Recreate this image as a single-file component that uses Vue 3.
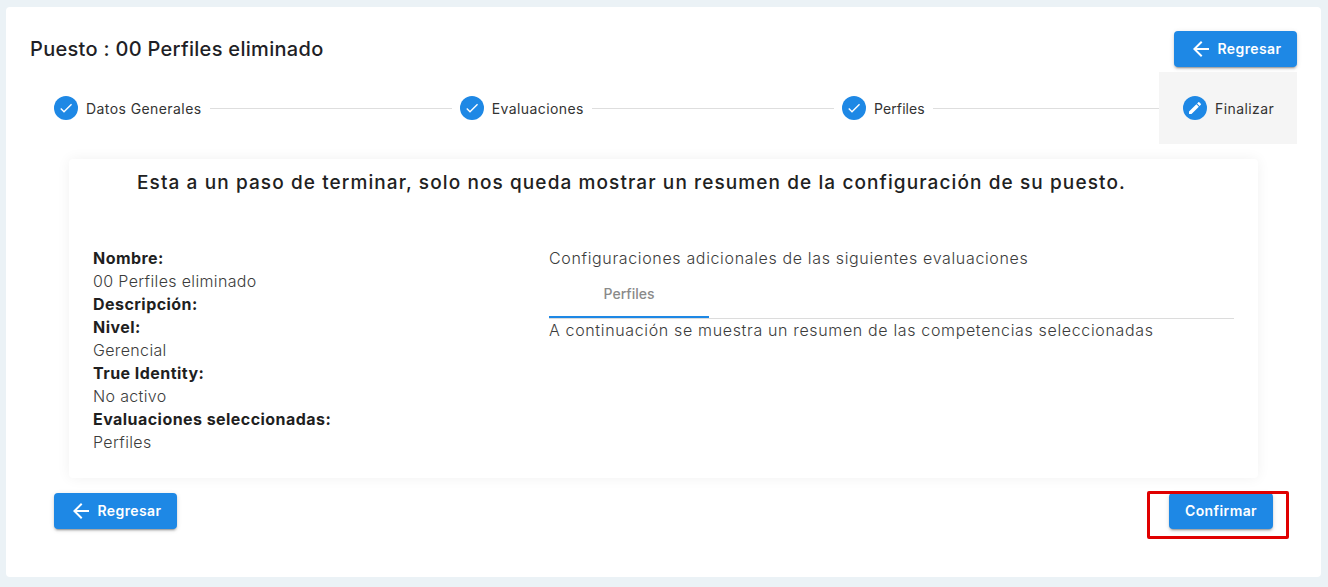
<script setup>
const steps = [
  { label: 'Datos Generales', icon: 'check' },
  { label: 'Evaluaciones', icon: 'check' },
  { label: 'Perfiles', icon: 'check', tight: true },
  { label: 'Finalizar', icon: 'edit', active: true }
]
const details = [
  ['Nombre:', '00 Perfiles eliminado'],
  ['Descripción:', ''],
  ['Nivel:', 'Gerencial'],
  ['True Identity:', 'No activo'],
  ['Evaluaciones seleccionadas:', 'Perfiles']
]
</script>

<template>
  <div class="page">
    <main class="card">
      <header class="head">
        <h1>Puesto : 00 Perfiles eliminado</h1>
        <button class="btn back">
          <svg viewBox="0 0 24 24" width="24" height="24"><path fill="currentColor" d="M20 11H7.83l5.59-5.59L12 4l-8 8 8 8 1.41-1.41L7.83 13H20v-2z"/></svg>
          <span class="btn-text">Regresar</span>
        </button>
      </header>

      <nav class="stepper">
        <template v-for="(s, i) in steps" :key="s.label">
          <div class="step" :class="{ active: s.active, tight: s.tight }">
            <span class="dot">
              <svg v-if="s.icon === 'check'" viewBox="0 0 24 24" width="18" height="18"><path fill="#fff" d="M9 16.17 4.83 12l-1.42 1.41L9 19 21 7l-1.41-1.41z"/></svg>
              <svg v-else viewBox="0 0 24 24" width="18" height="18"><path fill="#fff" d="M3 17.25V21h3.75L17.81 9.94l-3.75-3.75L3 17.25zM20.71 7.04a1 1 0 0 0 0-1.41l-2.34-2.34a1 1 0 0 0-1.41 0l-1.83 1.83 3.75 3.75 1.83-1.83z"/></svg>
            </span>
            <span class="label">{{ s.label }}</span>
          </div>
          <div v-if="i < steps.length - 1" class="line"></div>
        </template>
      </nav>

      <section class="summary">
        <p class="lead">Esta a un paso de terminar, solo nos queda mostrar un resumen de la configuración de su puesto.</p>
        <div class="cols">
          <div class="left">
            <template v-for="d in details" :key="d[0]">
              <div class="k">{{ d[0] }}</div>
              <div v-if="d[1]" class="v">{{ d[1] }}</div>
            </template>
          </div>
          <div class="right">
            <div class="v">Configuraciones adicionales de las siguientes evaluaciones</div>
            <div class="tabs"><div class="tab">Perfiles</div></div>
            <div class="v">A continuación se muestra un resumen de las competencias seleccionadas</div>
          </div>
        </div>
      </section>

      <footer class="foot">
        <button class="btn back">
          <svg viewBox="0 0 24 24" width="24" height="24"><path fill="currentColor" d="M20 11H7.83l5.59-5.59L12 4l-8 8 8 8 1.41-1.41L7.83 13H20v-2z"/></svg>
          <span class="btn-text">Regresar</span>
        </button>
        <div class="confirm-wrap">
          <button class="btn confirm"><span class="btn-text">Confirmar</span></button>
          <span class="mark"></span>
        </div>
      </footer>
    </main>
  </div>
</template>

<style>
html, body { margin: 0; background: #ebf2f6; }
</style>

<style scoped>
.page {
  box-sizing: border-box;
  width: 1328px;
  height: 587px;
  padding: 7px 7px 10px 6px;
  background: #ebf2f6;
  font-family: Inter, "Liberation Sans", sans-serif;
  color: #212121;
}
.card {
  box-sizing: border-box;
  height: 570px;
  padding: 24px 24px 0;
  background: #fff;
  border-radius: 4px;
}
.head {
  display: flex;
  justify-content: space-between;
  align-items: center;
  height: 36px;
}
h1 {
  margin: 0;
  font-size: 20px;
  font-weight: 500;
  letter-spacing: 0.3px;
  color: #1f1f26;
}
.btn {
  display: inline-flex;
  align-items: center;
  justify-content: center;
  height: 36px;
  padding: 0;
  border: 0;
  border-radius: 4px;
  background: #1e88e5;
  color: #fff;
  font-family: inherit;
  font-size: 14px;
  font-weight: 600;
  letter-spacing: 0.4px;
  box-shadow: 0 3px 1px -2px rgba(0,0,0,.2), 0 2px 2px 0 rgba(0,0,0,.14), 0 1px 5px 0 rgba(0,0,0,.12);
}
.btn-text { margin-top: -2px; }
.back { width: 123px; padding-left: 2px; gap: 4px; }
.back svg { margin-left: -2px; }
.stepper {
  display: flex;
  align-items: center;
  height: 72px;
  margin-top: 5px;
}
.step {
  display: flex;
  align-items: center;
  height: 72px;
  padding: 0 24px;
  box-sizing: border-box;
  flex: none;
}
.step.active { background: #f5f5f5; width: 138px; }
.dot {
  display: flex;
  align-items: center;
  justify-content: center;
  width: 24px;
  height: 24px;
  border-radius: 50%;
  background: #1e88e5;
  margin-right: 8px;
  flex: none;
}
.dot svg { width: 16px; height: 16px; }
.label { font-size: 14px; color: #333; letter-spacing: 0.42px; white-space: nowrap; }
.tight .label { letter-spacing: 0.1px; }
.line {
  flex: 1;
  height: 1px;
  background: #dedede;
  margin: 0 -16px;
}
.summary {
  box-sizing: border-box;
  width: 1189px;
  height: 319px;
  margin: 15px 0 0 39px;
  padding: 12px 24px 0;
  border-radius: 4px;
  background: #fff;
  box-shadow: 0 0 14px rgba(0,0,0,.06);
}
.lead {
  margin: 0 0 0 44px;
  font-size: 19px;
  font-weight: 500;
  line-height: 24px;
  letter-spacing: 1.1px;
  white-space: nowrap;
  color: #212121;
}
.cols {
  display: flex;
  margin-top: 52px;
}
.left { width: 456px; flex: none; }
.right { flex: 1; }
.k, .v { font-size: 16px; line-height: 23px; white-space: nowrap; }
.k { font-weight: 700; color: #1f1f1f; letter-spacing: 0.45px; }
.v { font-weight: 300; color: #3c3c3c; letter-spacing: 0.35px; }
.right .v { letter-spacing: 0.65px; }
.tabs {
  height: 48px;
  border-bottom: 1px solid #dcdcdc;
}
.tab {
  box-sizing: border-box;
  width: 160px;
  height: 48px;
  line-height: 48px;
  border-bottom: 2px solid #1e88e5;
  text-align: center;
  font-size: 14px;
  font-weight: 500;
  color: #8a8a8a;
}
.foot {
  display: flex;
  justify-content: space-between;
  margin: 15px 24px 0;
}
.confirm-wrap { position: relative; }
.confirm { width: 104px; }
.mark {
  position: absolute;
  left: -22px;
  top: -2px;
  width: 142px;
  height: 48px;
  box-sizing: border-box;
  border: 3px solid #e00000;
  border-radius: 2px;
}
</style>
